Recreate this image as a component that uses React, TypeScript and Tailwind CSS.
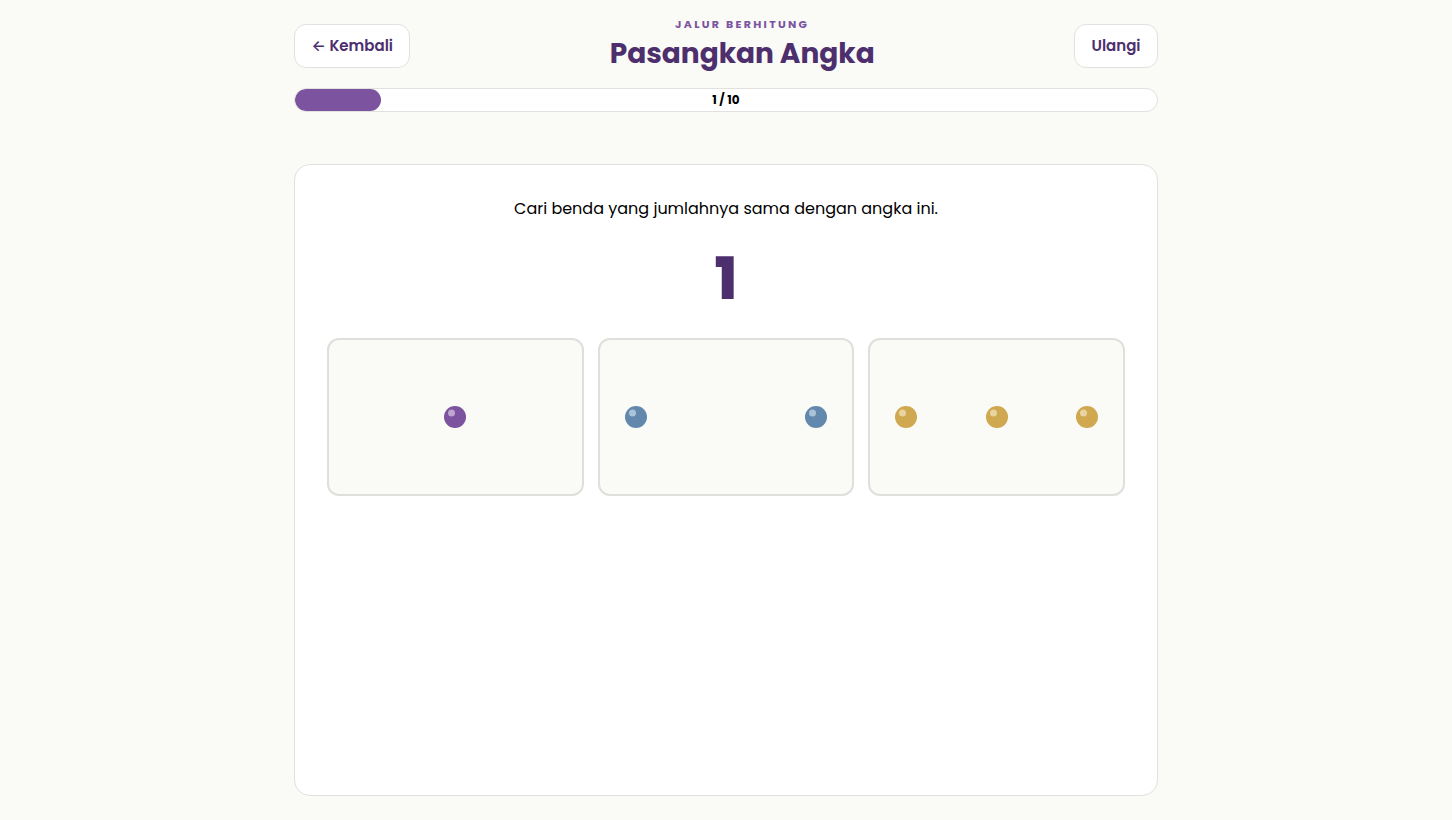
import { useState } from "react";

const font = { fontFamily: '"Poppins", "Inter", "Open Sans", sans-serif' };

type Choice = { count: number; color: string; shine: string };

const choices: Choice[] = [
  { count: 1, color: "#7b539e", shine: "#c9b3dc" },
  { count: 2, color: "#6289ad", shine: "#b9cde0" },
  { count: 3, color: "#cfa84f", shine: "#ecdcae" },
];

function Bead({ color, shine }: { color: string; shine: string }) {
  return (
    <svg width="22" height="22" viewBox="0 0 22 22" className="shrink-0">
      <circle cx="11" cy="11" r="11" fill={color} />
      <circle cx="7.5" cy="7" r="3.5" fill={shine} opacity="0.85" />
    </svg>
  );
}

export default function App() {
  const [step] = useState(1);
  const total = 10;
  const target = 1;

  return (
    <div className="min-h-screen w-full bg-[#fafaf6] text-black" style={font}>
      <div className="mx-auto w-[864px] pt-6 pb-6">
        <div className="flex h-11 items-start justify-between">
          <button className="h-11 rounded-xl border border-[#e3e1dd] bg-white px-[16.5px] text-[15px] font-semibold text-[#4e2f6e]">
            ← Kembali
          </button>
          <div className="flex flex-col items-center">
            <div className="-mt-[8px] text-[11px] font-bold uppercase tracking-[0.21em] text-[#7b539e]">
              Jalur Berhitung
            </div>
            <h1 className="mt-[1px] text-[28px] font-bold leading-[40px] text-[#4e2f6e]">
              Pasangkan Angka
            </h1>
          </div>
          <button className="h-11 rounded-xl border border-[#e3e1dd] bg-white px-[16.5px] text-[15px] font-semibold text-[#4e2f6e]">
            Ulangi
          </button>
        </div>

        <div className="relative mt-5 h-6 w-full overflow-hidden rounded-full border border-[#e3e1dd] bg-white">
          <div
            className="h-full rounded-full bg-[#7b539e]"
            style={{ width: `${(step / total) * 100}%` }}
          />
          <div className="absolute inset-0 flex items-center justify-center text-[12px] font-bold">
            {step} / {total}
          </div>
        </div>

        <div className="mt-[52px] h-[632px] rounded-2xl border border-[#e3e1dd] bg-white px-[32px] pt-[32px]">
          <p className="text-center text-[16px] leading-6">
            Cari benda yang jumlahnya sama dengan angka ini.
          </p>
          <div className="mt-[22px] text-center text-[58px] font-extrabold leading-[72px] text-[#4e2f6e]">
            {target}
          </div>
          <div className="mt-[23px] grid grid-cols-3 gap-[14px]">
            {choices.map((c) => (
              <button
                key={c.count}
                className={
                  c.count === 1
                    ? "flex h-[158px] items-center justify-center rounded-xl border-2 border-[#e0dfdc] bg-[#fafaf6]"
                    : "flex h-[158px] items-center justify-between rounded-xl border-2 border-[#e0dfdc] bg-[#fafaf6] px-[25px]"
                }
              >
                {Array.from({ length: c.count }).map((_, i) => (
                  <Bead key={i} color={c.color} shine={c.shine} />
                ))}
              </button>
            ))}
          </div>
        </div>
      </div>
    </div>
  );
}
